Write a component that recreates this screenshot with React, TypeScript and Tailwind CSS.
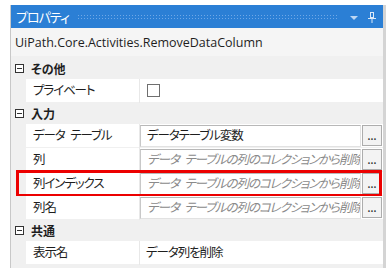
import React from "react";

const Minus = () => (
  <div className="w-[9px] h-[9px] border border-[#333] flex items-center justify-center bg-white">
    <div className="w-[5px] h-px bg-[#333]" />
  </div>
);

const Category = ({ label }: { label: string }) => (
  <div className="h-[21px] flex items-center bg-[#f0f0f0]">
    <div className="w-[15px] flex justify-center pl-[2px]">
      <Minus />
    </div>
    <span className="pl-[5px] text-[12px] font-bold text-[#1e1e1e]">{label}</span>
  </div>
);

const PropRow = ({
  label,
  children,
  highlight,
  button,
}: {
  label: string;
  children: React.ReactNode;
  highlight?: boolean;
  button?: boolean;
}) => (
  <div className="flex bg-[#f0f0f0] pl-[15px] relative">
    <div className="h-[24px] w-[113px] shrink-0 bg-white flex items-center pl-[7px] text-[12.5px] tracking-[-1.1px] [word-spacing:4px] text-[#1e1e1e] border-b border-[#f0f0f0] whitespace-pre">
      {label}
    </div>
    <div className="w-px shrink-0 bg-[#e8e8e8]" />
    <div className="flex-1 min-w-0 h-[24px] bg-white flex items-center border-b border-[#f0f0f0] gap-[1px]">
      {children}
      {button && (
        <div className="w-[20px] h-[21px] shrink-0 border border-[#adadad] bg-[#f3f3f3] flex items-end justify-center pb-[4px] mr-[1px]">
          <span className="text-[9px] leading-none text-[#333] font-bold">...</span>
        </div>
      )}
    </div>
    {highlight && (
      <div className="absolute left-[5px] right-[1px] -top-[2px] -bottom-px border-[3px] border-[#ec0000] pointer-events-none" />
    )}
  </div>
);

const TextBox = ({ text, placeholder }: { text: string; placeholder?: boolean }) => (
  <div className="flex-1 min-w-0 h-[22px] border border-[#e2e2e2] border-t-[#b8b8b8] border-l-[#c8c8c8] flex items-center pl-[6px] overflow-hidden whitespace-pre">
    <span
      className={
        placeholder
          ? "text-[12.5px] tracking-[-1.1px] [word-spacing:4px] italic text-[#8a8a8a]"
          : "text-[12.5px] tracking-[-1.1px] text-[#1e1e1e]"
      }
    >
      {text}
    </span>
  </div>
);

export default function App() {
  const ph = "データ テーブルの列のコレクションから削除されます";
  return (
    <div className="w-[390px] h-[274px] bg-white pt-[5px] pl-[10px] overflow-hidden font-['Noto_Sans_CJK_JP','Noto_Sans',sans-serif] [font-feature-settings:'palt']">
      <div className="w-[376px] border-l border-[#c8c8c8] border-r-[3px] border-r-[#d4d4d4]">
        <div className="h-[23px] bg-[#2b7fd5] flex items-center pl-[5px] pr-[6px]">
          <span className="text-[13px] tracking-[-1px] text-white">プロパティ</span>
          <div className="flex-1 mx-[8px] h-[5px] bg-[radial-gradient(#6fa8e6_0.8px,transparent_0.8px)] bg-[length:3px_3px]" />
          <svg width="10" height="10" viewBox="0 0 10 10" className="mx-[4px] mt-[3px]">
            <path d="M1 3h8L5 7z" fill="#bcd6f3" />
          </svg>
          <svg width="10" height="12" viewBox="0 0 10 12" className="ml-[4px]">
            <path d="M3 1h4v6H3z M4 2h2v4H4z M1 7h8v1H1z M4.5 8h1v4h-1z" fill="#dbe9f8" fillRule="evenodd" />
          </svg>
        </div>
        <div className="h-[28px] bg-[#f5f5f5] flex items-center pl-[4px] pt-[2px]">
          <span className="text-[12.5px] text-[#1e1e1e] font-['Open_Sans','Noto_Sans',sans-serif]">
            UiPath.Core.Activities.RemoveDataColumn
          </span>
        </div>
        <div className="bg-[#f0f0f0] pt-[2px] pb-[3px]">
          <Category label="その他" />
          <PropRow label="プライベート">
            <div className="ml-[7px] w-[13px] h-[13px] border border-[#6f6f6f] bg-white" />
          </PropRow>
          <Category label="入力" />
          <PropRow label="データ テーブル" button>
            <TextBox text="データテーブル変数" />
          </PropRow>
          <PropRow label="列" button>
            <TextBox text={ph} placeholder />
          </PropRow>
          <PropRow label="列インデックス" button highlight>
            <TextBox text={ph} placeholder />
          </PropRow>
          <PropRow label="列名" button>
            <TextBox text={ph} placeholder />
          </PropRow>
          <Category label="共通" />
          <PropRow label="表示名">
            <span className="pl-[6px] text-[12.5px] tracking-[-1.1px] text-[#1e1e1e]">データ列を削除</span>
          </PropRow>
        </div>
      </div>
    </div>
  );
}
